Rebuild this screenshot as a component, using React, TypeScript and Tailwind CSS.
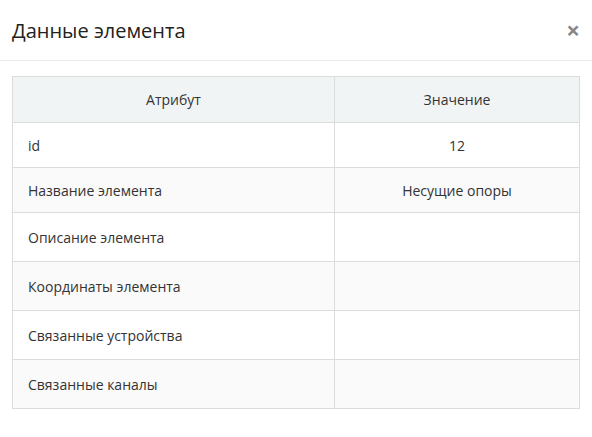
import React from 'react';

interface Row {
  label: string;
  value: string;
  tall?: boolean;
}

const rows: Row[] = [
  { label: 'id', value: '12' },
  { label: 'Название элемента', value: 'Несущие опоры' },
  { label: 'Описание элемента', value: '', tall: true },
  { label: 'Координаты элемента', value: '', tall: true },
  { label: 'Связанные устройства', value: '', tall: true },
  { label: 'Связанные каналы', value: '', tall: true },
];

const App: React.FC = () => {
  return (
    <div className="w-[592px] h-[437px] bg-white text-[#333] font-['Open_Sans',sans-serif]">
      {/* Modal header */}
      <div className="flex items-center justify-between h-[61px] pl-3 pr-[12px] border-b border-[#e9ecef]">
        <h2 className="text-[20px] leading-none text-[#222] pt-[1px]">Данные элемента</h2>
        <button className="text-[#888] text-[24px] font-bold leading-none pb-[1px]">×</button>
      </div>

      {/* Modal body */}
      <div className="pt-[15px] px-3">
        <table className="w-[568px] border-collapse text-[14px]">
          <thead>
            <tr className="h-[46px] bg-[#f1f4f5]">
              <th className="w-[322px] border border-[#dcdcdc] font-normal text-center">Атрибут</th>
              <th className="border border-[#dcdcdc] font-normal text-center">Значение</th>
            </tr>
          </thead>
          <tbody>
            {rows.map((row, i) => (
              <tr
                key={row.label}
                className={`${row.tall ? 'h-[49px]' : 'h-[45px]'} ${i % 2 === 1 ? 'bg-[#fafafa]' : 'bg-white'}`}
              >
                <td className="border border-[#dcdcdc] pl-[15px] pr-2">{row.label}</td>
                <td className="border border-[#dcdcdc] text-center">{row.value}</td>
              </tr>
            ))}
          </tbody>
        </table>
      </div>
    </div>
  );
};

export default App;
